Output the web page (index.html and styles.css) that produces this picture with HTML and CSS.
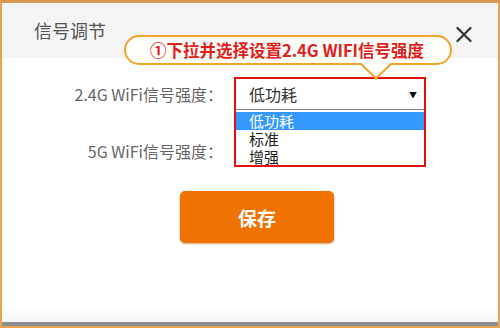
FILE: index.html
```html
<!DOCTYPE html>
<html lang="zh-CN">
<head>
  <meta charset="UTF-8">
  <title>信号调节</title>
  <link rel="stylesheet" href="styles.css">
</head>
<body>
  <div class="frame">
    <div class="header">
      <div class="title">信号调节</div>
      <svg class="close" width="16" height="15" viewBox="0 0 16 15">
        <path d="M1.5 1 L14.5 14 M14.5 1 L1.5 14" stroke="#333" stroke-width="2.2" stroke-linecap="round"/>
      </svg>
    </div>

    <div class="callout">
      <span>①下拉并选择设置2.4G WIFI信号强度</span>
      <svg class="tail" width="40" height="18" viewBox="0 0 40 18">
        <path d="M2 0 L18 15.5 L34 0" fill="#fffef8" stroke="#f0a428" stroke-width="2"/>
      </svg>
    </div>

    <div class="form">
      <div class="label">2.4G WiFi信号强度：</div>
      <div class="pick">
        <div class="select">低功耗<span class="arrow">▼</span></div>
        <div class="menu">
          <div class="opt active">低功耗</div>
          <div class="opt">标准</div>
          <div class="opt">增强</div>
        </div>
        <div class="mark"></div>
      </div>

      <div class="label">5G WiFi信号强度：</div>
      <div class="pick">
        <div class="select"></div>
      </div>
    </div>

    <div class="actions">
      <button class="save-btn">保存</button>
    </div>

    <div class="footer-bar"></div>
  </div>
</body>
</html>
```

FILE: styles.css
```css
body {
  margin: 0;
  font-family: "Noto Sans CJK SC", "Microsoft YaHei", sans-serif;
}
.frame {
  width: 500px;
  height: 328px;
  box-sizing: border-box;
  border: 2px solid #e9a24e;
  border-top: 3px solid #d99850;
  border-bottom: 2px solid #e9a24e;
  background: linear-gradient(to bottom, #fff 0, #fff 300px, #f6f6f6 319px);
  position: relative;
  display: flex;
  flex-direction: column;
}
.header {
  height: 55px;
  box-sizing: border-box;
  background: #f4f4f4;
  display: flex;
  align-items: flex-start;
  justify-content: space-between;
  padding: 0 26px 0 32px;
}
.title {
  font-size: 18px;
  line-height: 26px;
  color: #555;
  margin-top: 14px;
}
.close {
  margin-top: 24px;
}

/* 提示气泡 */
.callout {
  position: absolute;
  left: 122px;
  top: 32px;
  width: 328px;
  height: 30px;
  box-sizing: border-box;
  border: 2px solid #f0a428;
  border-radius: 15px;
  background: #fffef8;
  display: flex;
  align-items: center;
  justify-content: center;
  z-index: 5;
}
.callout span {
  color: #e0201c;
  font-weight: bold;
  font-size: 16.5px;
  padding-right: 2px;
  white-space: nowrap;
}
.tail {
  position: absolute;
  left: 232px;
  top: 26px;
}

.form {
  display: grid;
  grid-template-columns: 221px 188px;
  column-gap: 13px;
  row-gap: 27px;
  padding-top: 21px;
  align-items: center;
}
.label {
  text-align: right;
  font-size: 16px;
  color: #666;
}
.pick {
  position: relative;
  height: 30px;
}
.select {
  height: 30px;
  box-sizing: border-box;
  background: #fff;
  font-size: 16px;
  color: #333;
  padding: 0 7px 0 13px;
  display: flex;
  align-items: center;
  justify-content: space-between;
}
.arrow {
  font-size: 8px;
  color: #111;
}
.menu {
  position: absolute;
  left: -1px;
  right: 0;
  top: 30px;
  height: 57px;
  background: #fff;
  border-top: 1px solid #8a8a8a;
  z-index: 2;
}
.opt {
  height: 18px;
  line-height: 18px;
  font-size: 15px;
  color: #222;
  padding-left: 14px;
}
.opt.active {
  background: #3399ff;
  color: #fff;
  margin-top: 2px;
}
.mark {
  position: absolute;
  left: -2px;
  right: -2px;
  top: -2px;
  height: 86px;
  border: 2px solid #e31010;
  z-index: 3;
}

.actions {
  display: flex;
  justify-content: center;
  padding: 25px 0 0 14px;
}
.save-btn {
  width: 154px;
  height: 52px;
  border: none;
  border-radius: 5px;
  background: #ef7203;
  box-shadow: 0 1px 2px rgba(160, 80, 0, 0.5);
  color: #fff;
  font-family: inherit;
  font-size: 19px;
  font-weight: bold;
}
.footer-bar {
  margin-top: auto;
  height: 4px;
  background: #8a8c90;
}
```
